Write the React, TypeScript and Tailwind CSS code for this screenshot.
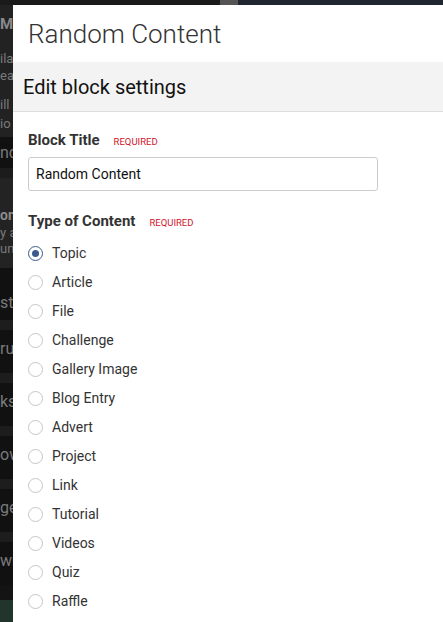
import React from 'react';

const contentTypes = [
    'Topic',
    'Article',
    'File',
    'Challenge',
    'Gallery Image',
    'Blog Entry',
    'Advert',
    'Project',
    'Link',
    'Tutorial',
    'Videos',
    'Quiz',
    'Raffle',
];

// rows of the page behind the modal, clipped to a thin strip
const stripRows = ['ru', 'ks', 'ow', 'ge', 'wr'];

const Radio: React.FC<{ checked?: boolean }> = ({ checked }) => (
    <span
        className={`w-[15px] h-[15px] rounded-full border-[1.5px] flex items-center justify-center bg-white shrink-0 ${
            checked ? 'border-[#3b5a8c]' : 'border-[#c6c6c6]'
        }`}
    >
        {checked && <span className="w-[7px] h-[7px] rounded-full bg-[#3b5a8c]" />}
    </span>
);

const BackdropStrip: React.FC = () => (
    <div className="w-[13px] shrink-0 flex flex-col overflow-hidden text-[#7a7a7a] whitespace-nowrap" style={{ fontFamily: 'Roboto, sans-serif' }}>
        {/* first block */}
        <div className="h-[132px] bg-[#222222] flex flex-col text-[13px] leading-[15px]">
            <div className="mt-[12px] font-bold text-[#8a8a8a] text-[15px]">Ma</div>
            <div className="mt-[19px]">ilai</div>
            <div className="mt-[2px]">ea</div>
            <div className="mt-[14px]">ill</div>
            <div className="mt-[4px]">io</div>
        </div>
        <div className="h-[31px] bg-[#111111] flex items-center text-[16px]">nd</div>
        <div className="h-[10px] bg-[#1c1c1c]" />
        <div className="h-[90px] bg-[#232323] flex flex-col text-[13px] leading-[15px]">
            <div className="mt-[30px] font-bold text-[#8a8a8a] text-[14px]">on</div>
            <div className="mt-[2px]">y a</div>
            <div className="mt-[1px]">un</div>
        </div>
        <div className="h-[52px] bg-[#111111] flex items-end pb-[8px] text-[16px] leading-[18px]">ste</div>
        {stripRows.map((t) => (
            <div key={t} className="h-[53px] flex flex-col shrink-0">
                <div className="h-[10px] bg-[#1d1d1d]" />
                <div className="flex-1 bg-[#111111] flex items-center pb-[6px] text-[16px]">{t}</div>
            </div>
        ))}
        <div className="h-[15px] bg-[#141414] shrink-0" />
        <div className="flex-1 bg-[#21352d]" />
    </div>
);

export default function App() {
    return (
        <div className="w-[443px] h-[622px] overflow-hidden flex flex-col bg-[#1b1b1b]">
            {/* top edge of the page behind */}
            <div className="h-[5px] flex shrink-0">
                <div className="w-[220px] bg-[#1a1a1a]" />
                <div className="w-[18px] bg-[#555555]" />
                <div className="flex-1 bg-[#1f2630]" />
            </div>

            <div className="flex-1 flex min-h-0">
                <BackdropStrip />

                {/* Modal */}
                <div className="flex-1 bg-white flex flex-col" style={{ fontFamily: 'Roboto, "Liberation Sans", sans-serif' }}>
                    <div className="h-[57px] pl-[15px] pt-[16px] shrink-0">
                        <h2 className="text-[26px] leading-none font-light text-[#333333]">Random Content</h2>
                    </div>

                    <div className="h-[50px] bg-[#f3f3f3] border-b border-[#dddddd] flex items-center pl-[10px] shrink-0">
                        <h3 className="text-[20px] text-[#111111]">Edit block settings</h3>
                    </div>

                    <div className="pl-[15px] pt-[18px] flex flex-col">
                        <div className="flex items-baseline gap-[14px] leading-[20px]">
                            <span className="text-[15px] font-bold text-[#333333]">Block Title</span>
                            <span className="text-[9.5px] text-[#d0142c]">REQUIRED</span>
                        </div>
                        <input
                            type="text"
                            defaultValue="Random Content"
                            className="mt-[5px] w-[350px] h-[34px] border border-[#cccccc] rounded-[3px] px-[7px] text-[14px] text-[#111111] outline-none"
                        />

                        <div className="mt-[20px] flex items-baseline gap-[14px] leading-[20px]">
                            <span className="text-[15px] font-bold text-[#333333]">Type of Content</span>
                            <span className="text-[9.5px] text-[#d0142c]">REQUIRED</span>
                        </div>

                        <div className="mt-[6px] flex flex-col">
                            {contentTypes.map((type, i) => (
                                <label key={type} className="h-[29px] flex items-center gap-[9px] text-[14px] text-[#333333]">
                                    <Radio checked={i === 0} />
                                    {type}
                                </label>
                            ))}
                        </div>
                    </div>
                </div>
            </div>
        </div>
    );
}
